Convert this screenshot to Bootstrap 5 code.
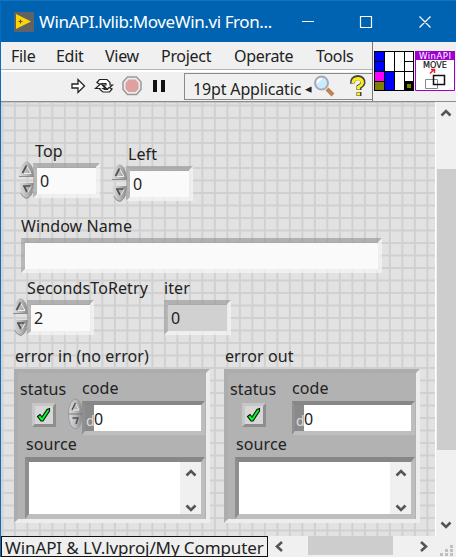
<!DOCTYPE html>
<html lang="en">
<head>
<meta charset="utf-8">
<meta name="viewport" content="width=device-width, initial-scale=1">
<title>WinAPI.lvlib:MoveWin.vi Front Panel</title>
<link rel="stylesheet" href="https://cdn.jsdelivr.net/npm/bootstrap@5.3.0/dist/css/bootstrap.min.css">
<style>
html,body{height:557px;overflow:hidden}
body{font:16px/20px "Noto Sans","Open Sans",sans-serif;color:#222;background:#f0f0f0;letter-spacing:-.3px}
svg{display:block;flex:none}
.win{width:456px;height:557px;border-left:1px solid #0a6cc0}
.title-bar{height:42px;background:#0063b1;border-top:1px solid #1a73b9;color:#fff;font-size:17px;letter-spacing:-.4px;padding-left:13px}
.title-text{width:243px;margin-left:5px}
.head{height:60px;background:#f0f0f0;border-bottom:1px solid #8c8c8c}
.menus{height:27px;padding-left:10px}
.m1{width:45px}.m2{width:49px}.m3{width:56px}.m4{width:73px}.m5{width:82px}
.tools{height:32px;border-top:1px solid #b4b4b4;box-shadow:inset 0 2px #fff}
.font-ring{width:188px;height:27px;margin:1px 0 0 12px;border:1px solid #8a8a8a;border-right:0;padding-left:8px;line-height:30px}
.ring-t{width:112px;letter-spacing:-.15px}
.arrow{width:8px;font-size:13px;line-height:28px}
.vi-icons{width:84px;border-left:1px solid #777;padding:9px 0 0 1px;gap:1px}
.panel{width:434px;height:434px;letter-spacing:.1px;background-color:#e2e2e2;
background-image:linear-gradient(90deg,#d0d0d0 1.6px,transparent 1.6px),linear-gradient(#d0d0d0 1.6px,transparent 1.6px);
background-size:12.5px 12.5px;background-position:.4px 0,0 2.5px;box-shadow:inset 0 1px #c6c6c6}
.lbl{height:20px;white-space:nowrap}
.well{width:67px;height:35px;background:#fafafa;background-clip:padding-box;border:4px solid;border-color:rgba(145,145,145,.6) rgba(245,245,245,.75) rgba(245,245,245,.75) rgba(150,150,150,.55);box-shadow:inset 0 1px #a9a9a9;line-height:29px;padding-left:3px}
.well-wide{width:361px}
.well-out{background-color:#d1d1d1}
.cluster{width:196px;height:154px;margin-top:2px;background:#b2b2b2;border:4px solid;border-color:#adadad #ededed #ededed #adadad}
.led{width:24px;height:24px;margin:4px 0 0 12px;background:#d7d7d7;border:3px solid;border-color:#c6c6c6 #8e8e8e #8e8e8e #c6c6c6}
.code{width:123px;height:34px;margin-top:3px;background:#fff;border:solid;border-width:4px 4px 4px 3px;border-color:#878787 #bebebe #bebebe #909090;line-height:29px}
.radix{width:9px;background:#8a8a8a;color:#ddd;font-size:14px;line-height:31px;padding-left:1px}
.source{width:180px;height:62px;margin:2px 0 0 7px;background:#fff;border:solid;border-width:5px 4px;border-color:#878787 #bebebe #bebebe #8e8e8e}
.source-bar{width:21px;background:#f0f0f0;padding:7px 0 2px}
.row-pos{height:101px;padding:39px 0 0 18px}
.top-c{width:93px}.left-c{padding-top:3px}
.spin-row .well{margin-left:-1px}
.row-pos .well{margin-top:2px}
.name-c{margin:13px 0 0 20px}.name-c .well{margin-top:2px}
.row-sec{margin-top:5px;padding-left:12px}
.sec-c{width:151px}.sec-c .lbl{padding-left:14px}
.row-sec .well{margin-top:2px}
.row-err{margin:11px 0 0 13px;height:176px}.err{width:210px}.err>.lbl{padding-left:1px;margin-top:-1px;height:21px}
.stat{width:50px;padding:6px 0 0 2px}
.spin-slot{width:15px;margin-top:25px}
.codec{margin-left:-1px;padding-top:5px}
.src{padding-left:8px;margin-top:-1px;height:21px}
.vbar{width:21px;background:#f0f0f0;border-left:1px solid #fff;padding:7px 0}
.vthumb{width:19px;height:281px;margin-top:52px;background:#cdcdcd}
.foot{height:21px;background:#f0f0f0}
.context{width:267px;height:21px;border:1px solid #111;background:#efefef;padding-left:3px;line-height:21px;white-space:nowrap;font-size:17px;letter-spacing:-.1px}
.hthumb{width:85px;height:19px;background:#cdcdcd}
</style>
</head>
<body>
<svg width="0" height="0" class="position-absolute" aria-hidden="true">
<defs>
<linearGradient id="metal" x2="1"><stop stop-color="#dcdcdc"/><stop offset=".5" stop-color="#bbb"/><stop offset="1" stop-color="#858585"/></linearGradient>
<symbol id="spin" viewBox="0 0 15 38"><path d="M0 15Q1 2 7.500 0Q14 2 15 15ZM0 22H15Q14 35 7.500 38Q1 35 0 22Z" fill="url(#metal)"/><path d="M0 15.500H15M1.500 32Q4 37 8 37.500Q12 36 14 30" stroke="#8d8d8d" fill="none"/><path d="M3.500 12L7.500 4.500M4 25H11.500M5 25L8 31" fill="none" stroke="#505050" stroke-width="1.700"/><path d="M8 5.500L12 12.500H5M12 25.500L9 31" fill="none" stroke="#eee"/></symbol>
<symbol id="spin-s" viewBox="0 0 15 32"><ellipse cx="7.500" cy="16" rx="7" ry="15" fill="url(#metal)" stroke="#999"/><path d="M1 16H14" stroke="#777"/><path d="M4 12L7.500 5M4.500 20H10L8 26" fill="none" stroke="#505060" stroke-width="1.500"/><path d="M8 6L11 12H5" fill="none" stroke="#eee"/></symbol>
<symbol id="tick" viewBox="0 0 18 18"><path d="M2.500 10.500L5 8.500L7 11L12 3.500L14.500 2.500V5L8 15H6Z" fill="#0f2" stroke="#111" stroke-width="1.100"/></symbol>
<symbol id="up" viewBox="0 0 12 8"><path d="M1.500 6.500L6 2L10.500 6.500" fill="none" stroke="#555" stroke-width="2.600"/></symbol>
<symbol id="down" viewBox="0 0 12 8"><path d="M1.500 1.500L6 6L10.500 1.500" fill="none" stroke="#555" stroke-width="2.600"/></symbol>
</defs></svg>
<main class="win d-flex flex-column">
<header class="title-bar d-flex align-items-center">
<svg width="20" height="20"><path fill="#606365" d="M0 0h20v20H0z"/><path fill="#ffd500" d="M2 2L17 9.500L2 17Z"/><path d="M4.500 9.500h4M6.500 7.500v4" stroke="#555" stroke-width="1.200"/></svg>
<span class="title-text text-nowrap">WinAPI.lvlib:MoveWin.vi Fron...</span>
<svg width="174" height="40" fill="none" stroke="#fff" stroke-width="1.200"><path d="M20 19.500h12M78.500 14.500h11v11h-11zM137.500 14.500l11 11m0-11l-11 11"/></svg>
</header>
<div class="head d-flex">
<div class="flex-grow-1">
<nav class="menus d-flex align-items-center text-nowrap"><span class="m1">File</span><span class="m2">Edit</span><span class="m3">View</span><span class="m4">Project</span><span class="m5">Operate</span><span class="m6">Tools</span></nav>
<div class="tools d-flex align-items-center">
<svg width="102" height="22" class="ms-auto" fill="none"><path d="M2 9H8V4.500L14.500 11L8 17.500V13H2Z" fill="#fff" stroke="#222" stroke-width="1.300"/><path d="M27 7.500L29.500 4.500H37L40 7.500V10H42.500L37.500 14.500L33 10H36V8.500H32.500L31 10Z" fill="#fff" stroke="#222" stroke-width="1.200"/><path d="M42 14L39.500 17H33L30 14.500V13.500H25.500L31 8.500L35 13.500H33L34.500 14.500H37.500L39 12.500Z" fill="#fff" stroke="#222" stroke-width="1.200"/><path d="M57.500 2H66.500L71 7V14.500L66.500 19.500H57.500L53 14.500V7Z" fill="#ececec" stroke="#999" stroke-width="1.500"/><path d="M58.500 4.500H65.500L68.500 8V14L65.500 17H58.500L55.500 14V8Z" fill="#dfa0a2"/><path d="M85 5V17M93 5V17" stroke="#111" stroke-width="4"/></svg>
<div class="font-ring text-nowrap d-flex"><span class="ring-t overflow-hidden">19pt Applicatic</span><span class="arrow">◂</span><svg width="59" height="25"><path d="M14 15l6 6" stroke="#c08050" stroke-width="4"/><circle cx="8.500" cy="9" r="6.500" fill="#c9eaff" stroke="#a9a9b4" stroke-width="2"/><path d="M4.500 9Q5 5 9 5" stroke="#fff" fill="none" stroke-width="2"/><g fill="none"><path d="M39.500 9.500Q39 4 45 3.500Q50.500 4 50 9Q49.500 11 46 13V16M46 18V22" stroke="#444" stroke-width="5"/><path d="M40 9Q40 4.500 45 4.500Q49.500 5 49.500 9Q49 11 45.500 13V15.500M45.500 18.500V21.500" stroke="#ffee16" stroke-width="3"/></g></svg></div>
</div>
</div>
<div class="vi-icons d-flex">
<svg width="40" height="40"><path d="M0 0h40v40H0z"/><path fill="#fff" d="M11 1h9v19h-9zM21 1h9v19h-9zM31 1h8v9h-8zM31 11h8v9h-8zM21 21h9v18h-9zM31 21h8v9h-8z"/><path fill="#00f" d="M1 1h9v9H1zM1 11h9v9H1zM11 21h9v18h-9z"/><path fill="#f0f" d="M1 21h9v9H1z"/><path fill="#808000" d="M1 31h9v8H1zM33 33h4v4h-4z"/></svg>
<svg width="40" height="40" font-family="DejaVu Sans,sans-serif" letter-spacing="0"><path fill="#fff" stroke="#9b00cf" d="M.5.500h39v39H.5z"/><path fill="#9b00cf" d="M0 0h40v9H0z"/><text x="4" y="8" fill="#fff" font-size="8.500" textLength="32">WinAPI</text><text x="8" y="17" font-size="9" fill="#111" stroke="#111" stroke-width=".2" textLength="24" lengthAdjust="spacingAndGlyphs">MOVE</text><path d="M15 22.500l4-4M16 18.500h3.500v3.500" stroke="#f02020" stroke-width="1.500" fill="none"/><path d="M10.500 28.500h12v9h-12z" fill="none" stroke="#888"/><path d="M18.500 24.500h11v9h-11z" fill="none" stroke="#111" stroke-width="1.500"/></svg>
</div>
</div>
<div class="d-flex">
<section class="panel">
<div class="d-flex row-pos">
<div class="top-c"><div class="lbl ps-3">Top</div><div class="d-flex spin-row"><svg width="15" height="38"><use href="#spin"/></svg><div class="well">0</div></div></div>
<div class="left-c"><div class="lbl ps-3">Left</div><div class="d-flex spin-row"><svg width="15" height="38"><use href="#spin"/></svg><div class="well">0</div></div></div>
</div>
<div class="name-c"><div class="lbl">Window Name</div><div class="well well-wide"></div></div>
<div class="d-flex row-sec"><div class="sec-c"><div class="lbl">SecondsToRetry</div><div class="d-flex spin-row"><svg width="15" height="38"><use href="#spin"/></svg><div class="well">2</div></div></div>
<div class="iter-c"><div class="lbl">iter</div><div class="well well-out">0</div></div></div>
<div class="d-flex row-err">
<div class="err"><div class="lbl">error in (no error)</div><div class="cluster"><div class="d-flex"><div class="stat"><div class="lbl">status</div><svg class="led" viewBox="0 0 18 18"><use href="#tick"/></svg></div><svg class="spin-slot" width="15" height="32"><use href="#spin-s"/></svg><div class="codec"><div class="lbl">code</div><div class="code d-flex"><span class="radix">d</span><span>0</span></div></div></div><div class="lbl src">source</div><div class="source d-flex justify-content-end"><div class="source-bar d-flex flex-column align-items-center justify-content-between"><svg width="12" height="8"><use href="#up"/></svg><svg width="12" height="8"><use href="#down"/></svg></div></div></div></div>
<div class="err"><div class="lbl">error out</div><div class="cluster"><div class="d-flex"><div class="stat"><div class="lbl">status</div><svg class="led" viewBox="0 0 18 18"><use href="#tick"/></svg></div><span class="spin-slot"></span><div class="codec"><div class="lbl">code</div><div class="code d-flex"><span class="radix">d</span><span>0</span></div></div></div><div class="lbl src">source</div><div class="source d-flex justify-content-end"><div class="source-bar d-flex flex-column align-items-center justify-content-between"><svg width="12" height="8"><use href="#up"/></svg><svg width="12" height="8"><use href="#down"/></svg></div></div></div></div>
</div>
</section>
<aside class="vbar d-flex flex-column align-items-center"><svg width="12" height="8"><use href="#up"/></svg><div class="vthumb"></div><svg width="12" height="8" class="mt-auto"><use href="#down"/></svg></aside>
</div>
<footer class="foot d-flex"><div class="context">WinAPI &amp; LV.lvproj/My Computer</div>
<svg width="40" height="20" fill="none" stroke="#555" stroke-width="2.600"><path d="M14 6L9 10.500L14 15"/></svg><div class="hthumb"></div>
<svg width="62" height="21"><path d="M28 6L33 10.500L28 15" fill="none" stroke="#555" stroke-width="2.600"/><path d="M57 9h3v3h-3zM52 13h3v3h-3zM57 13h3v3h-3zM47 17h3v3h-3zM52 17h3v3h-3zM57 17h3v3h-3z" fill="#bfbfbf"/></svg></footer>
</main>
<script src="https://cdn.jsdelivr.net/npm/bootstrap@5.3.0/dist/js/bootstrap.bundle.min.js"></script>
</body>
</html>
